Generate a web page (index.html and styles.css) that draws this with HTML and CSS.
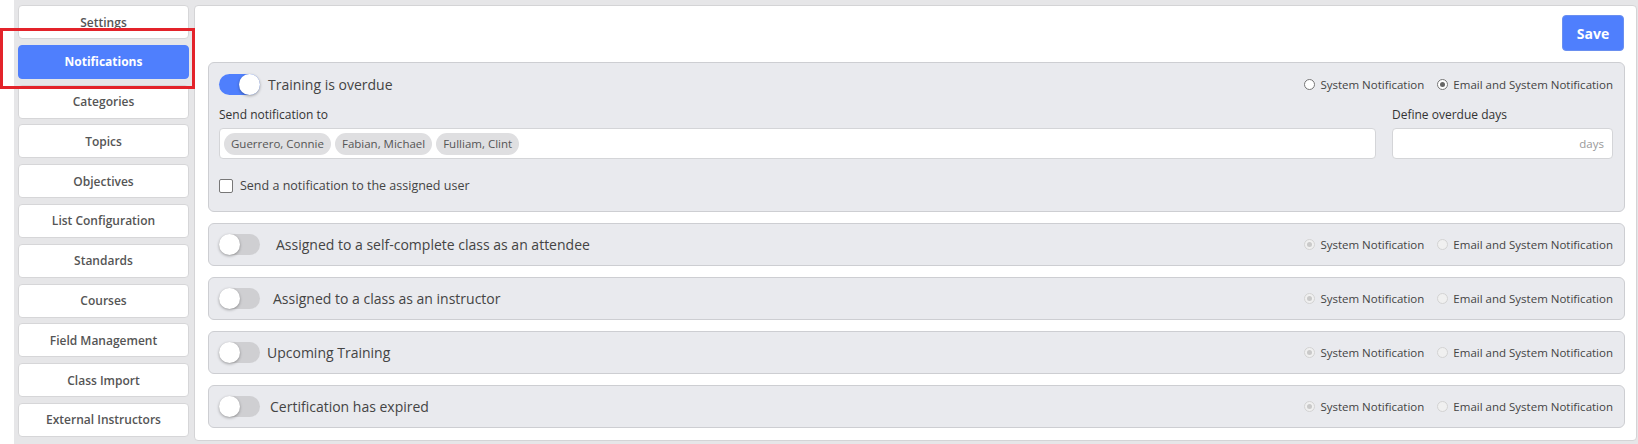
FILE: index.html
```html
<!DOCTYPE html>
<html>
<head>
<meta charset="utf-8">
<link rel="stylesheet" href="styles.css">
</head>
<body>
<div class="page">
  <nav class="sidebar">
    <button class="nav-btn">Settings</button>
    <button class="nav-btn active">Notifications</button>
    <button class="nav-btn">Categories</button>
    <button class="nav-btn">Topics</button>
    <button class="nav-btn">Objectives</button>
    <button class="nav-btn">List Configuration</button>
    <button class="nav-btn">Standards</button>
    <button class="nav-btn">Courses</button>
    <button class="nav-btn">Field Management</button>
    <button class="nav-btn">Class Import</button>
    <button class="nav-btn">External Instructors</button>
  </nav>
  <main class="panel">
    <div class="toolbar"><button class="save-btn">Save</button></div>

    <section class="card card-open">
      <div class="card-head">
        <span class="toggle on"><span class="knob"></span></span>
        <span class="card-title t-overdue">Training is overdue</span>
        <div class="radios">
          <label class="radio"><span class="dot"></span>System Notification</label>
          <label class="radio"><span class="dot checked"></span>Email and System Notification</label>
        </div>
      </div>
      <div class="fields">
        <div class="field">
          <div class="field-label">Send notification to</div>
          <div class="input chips">
            <span class="chip">Guerrero, Connie</span>
            <span class="chip">Fabian, Michael</span>
            <span class="chip">Fulliam, Clint</span>
          </div>
        </div>
        <div class="field">
          <div class="field-label">Define overdue days</div>
          <div class="input days"><span class="suffix">days</span></div>
        </div>
      </div>
      <label class="check"><span class="box"></span>Send a notification to the assigned user</label>
    </section>

    <section class="card">
      <div class="card-head">
        <span class="toggle"><span class="knob"></span></span>
        <span class="card-title t-self">Assigned to a self-complete class as an attendee</span>
        <div class="radios">
          <label class="radio disabled"><span class="dot checked"></span>System Notification</label>
          <label class="radio disabled"><span class="dot"></span>Email and System Notification</label>
        </div>
      </div>
    </section>

    <section class="card">
      <div class="card-head">
        <span class="toggle"><span class="knob"></span></span>
        <span class="card-title t-instr">Assigned to a class as an instructor</span>
        <div class="radios">
          <label class="radio disabled"><span class="dot checked"></span>System Notification</label>
          <label class="radio disabled"><span class="dot"></span>Email and System Notification</label>
        </div>
      </div>
    </section>

    <section class="card">
      <div class="card-head">
        <span class="toggle"><span class="knob"></span></span>
        <span class="card-title t-upcoming">Upcoming Training</span>
        <div class="radios">
          <label class="radio disabled"><span class="dot checked"></span>System Notification</label>
          <label class="radio disabled"><span class="dot"></span>Email and System Notification</label>
        </div>
      </div>
    </section>

    <section class="card">
      <div class="card-head">
        <span class="toggle"><span class="knob"></span></span>
        <span class="card-title t-cert">Certification has expired</span>
        <div class="radios">
          <label class="radio disabled"><span class="dot checked"></span>System Notification</label>
          <label class="radio disabled"><span class="dot"></span>Email and System Notification</label>
        </div>
      </div>
    </section>
  </main>
  <div class="highlight"></div>
</div>
</body>
</html>
```

FILE: styles.css
```css
* { box-sizing: border-box; }
html, body { margin: 0; padding: 0; background: #ffffff; }
body { font-family: "Open Sans", "Noto Sans", sans-serif; color: #444; }

.page {
  position: relative;
  margin-left: 14px;
  height: 444px;
  background: #e6e6e8;
  padding: 5px 1px 3px 4px;
  display: flex;
  gap: 5px;
}

.sidebar {
  width: 171px;
  display: flex;
  flex-direction: column;
  gap: 5.8px;
}
.nav-btn {
  height: 34px;
  background: #fff;
  border: 1px solid #d6d6d8;
  border-radius: 4px;
  font-family: inherit;
  font-size: 12px;
  font-weight: 600;
  color: #555;
  padding: 0;
}
.nav-btn.active {
  background: #4f7ffd;
  border-color: #4f7ffd;
  color: #fff;
  font-weight: 700;
}

.highlight {
  position: absolute;
  left: -14px;
  top: 28px;
  width: 195px;
  height: 61px;
  border: 3px solid #e3232a;
}

.panel {
  flex: 1;
  background: #fff;
  border: 1px solid #d4d4d6;
  border-radius: 4px;
  padding: 9px 11px 0 13px;
  display: flex;
  flex-direction: column;
  gap: 11px;
}
.toolbar {
  display: flex;
  justify-content: flex-end;
  margin-right: 1px;
  height: 36px;
}
.save-btn {
  width: 62px;
  height: 36px;
  background: #4f7ffd;
  border: 1px solid #6a8ff0;
  border-radius: 4px;
  color: #fff;
  font-family: inherit;
  font-size: 14px;
  font-weight: 700;
  padding: 0;
}

.card {
  background: #e9eaee;
  border: 1px solid #cdced2;
  border-radius: 6px;
  padding: 0 11px 0 10px;
  height: 43px;
  display: flex;
  flex-direction: column;
  justify-content: center;
}
.card-open {
  height: 150px;
  justify-content: flex-start;
  padding-top: 10px;
}
.card-head {
  display: flex;
  align-items: center;
  height: 22px;
}
.toggle {
  position: relative;
  width: 41px;
  height: 21px;
  border-radius: 11px;
  background: #cfcfd2;
  flex: none;
}
.toggle.on { background: #4f7ffd; }
.knob {
  position: absolute;
  top: 0;
  left: 0;
  width: 21px;
  height: 21px;
  border-radius: 50%;
  background: #fff;
  box-shadow: 0 1px 3px rgba(0,0,0,0.35);
}
.toggle.on .knob { left: 20px; }

.card-title {
  font-size: 14px;
  font-weight: 500;
  color: #444;
}
.t-overdue { margin-left: 8px; }
.t-self { margin-left: 16px; }
.t-instr { margin-left: 13px; }
.t-upcoming { margin-left: 7px; }
.t-cert { margin-left: 10px; }

.radios {
  margin-left: auto;
  display: flex;
  gap: 13px;
}
.radio {
  display: flex;
  align-items: center;
  font-size: 11.5px;
  color: #444;
}
.dot {
  width: 11px;
  height: 11px;
  border-radius: 50%;
  border: 1px solid #767676;
  background: #fff;
  margin-right: 5px;
  position: relative;
}
.dot.checked::after {
  content: "";
  position: absolute;
  left: 2px;
  top: 2px;
  width: 5px;
  height: 5px;
  border-radius: 50%;
  background: #666;
}
.radio.disabled .dot { border-color: #d3d3d3; background: #f0f0f0; }
.radio.disabled .dot.checked::after { background: #c9c9c9; }

.fields {
  display: grid;
  grid-template-columns: 1fr 221px;
  column-gap: 16px;
  margin-top: 12px;
}
.field-label {
  font-size: 12px;
  font-weight: 500;
  color: #333;
  height: 16px;
  line-height: 16px;
  margin-bottom: 5px;
}
.input {
  height: 31px;
  background: #fff;
  border: 1px solid #d4d5d8;
  border-radius: 4px;
  display: flex;
  align-items: center;
}
.chips { padding-left: 4px; gap: 4px; }
.chip {
  height: 22px;
  line-height: 22px;
  padding: 0 7px;
  background: #dfdfe1;
  border-radius: 11px;
  font-size: 11.5px;
  color: #555;
}
.days { justify-content: flex-end; padding-right: 8px; }
.suffix { font-size: 11.5px; color: #999; }

.check {
  display: flex;
  align-items: center;
  margin-top: 18px;
  font-size: 12.5px;
  color: #444;
}
.box {
  width: 14px;
  height: 14px;
  border: 1px solid #777;
  border-radius: 2px;
  background: #fff;
  margin-right: 7px;
}
```
